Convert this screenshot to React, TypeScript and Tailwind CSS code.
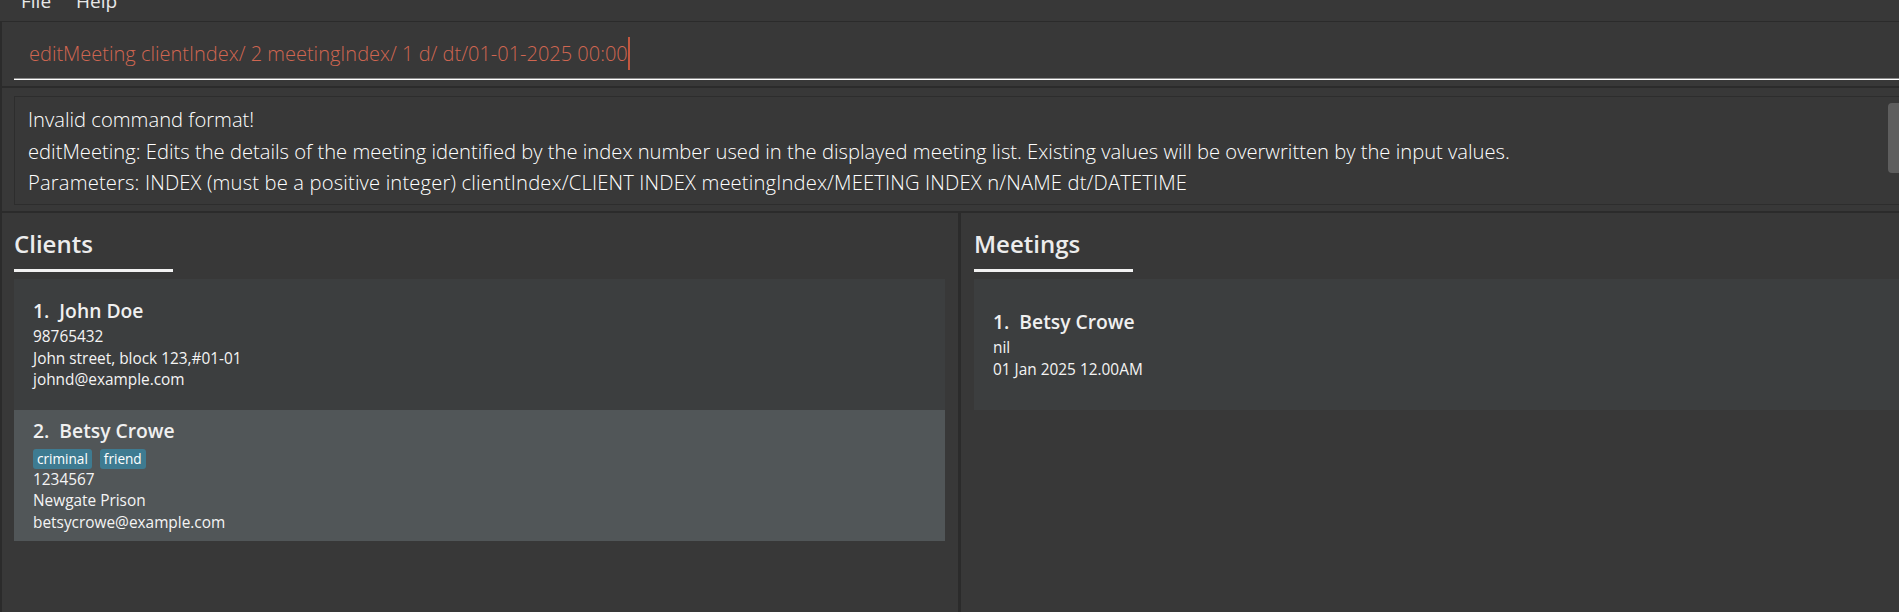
import React from "react";

const font = { fontFamily: '"Open Sans", "Noto Sans", sans-serif' };

type Client = {
  name: string;
  tags: string[];
  phone: string;
  address: string;
  email: string;
};

const clients: Client[] = [
  {
    name: "John Doe",
    tags: [],
    phone: "98765432",
    address: "John street, block 123,#01-01",
    email: "johnd@example.com",
  },
  {
    name: "Betsy Crowe",
    tags: ["criminal", "friend"],
    phone: "1234567",
    address: "Newgate Prison",
    email: "betsycrowe@example.com",
  },
];

function PanelTitle({ title }: { title: string }) {
  return (
    <div className="flex flex-col">
      <div className="h-[32px] text-[24px] leading-[33px] font-semibold text-[#ececec]">
        {title}
      </div>
      <div className="mt-[10px] h-[3px] w-[159px] bg-[#f2f2f2]" />
    </div>
  );
}

function ClientCard({ client, index }: { client: Client; index: number }) {
  return (
    <div
      className={
        index % 2 === 0
          ? "flex h-[131px] flex-col justify-center bg-[#3c3e3f] pl-[19px]"
          : "flex h-[131px] flex-col justify-center bg-[#515658] pl-[19px]"
      }
    >
      <div className="mb-[2px] text-[19.3px] leading-[26px] font-semibold text-[#f0f0f0]">
        {index + 1}.&nbsp;&nbsp;{client.name}
      </div>
      {client.tags.length > 0 && (
        <div className="mt-[3px] flex gap-[8px]">
          {client.tags.map((t) => (
            <span
              key={t}
              className="h-[20px] rounded-[3px] bg-[#3e7b91] px-[4px] text-[13.6px] leading-[20px] text-white"
            >
              {t}
            </span>
          ))}
        </div>
      )}
      <div className="text-[15.4px] leading-[21.5px] text-[#f4f4f4]">{client.phone}</div>
      <div className="text-[15.4px] leading-[21.5px] text-[#f4f4f4]">{client.address}</div>
      <div className="text-[15.4px] leading-[21.5px] text-[#f4f4f4]">{client.email}</div>
    </div>
  );
}

export default function App() {
  return (
    <div className="flex h-[612px] w-full flex-col overflow-hidden bg-[#383838]" style={font}>
      {/* Menu bar, scrolled partly out of view */}
      <div className="h-[22px] overflow-hidden border-b border-[#2b2b2b]">
        <div className="-mt-[13px] flex gap-[25px] pl-[21px] text-[19px] leading-[28px] text-[#e8e8e8]">
          <span>File</span>
          <span>Help</span>
        </div>
      </div>

      {/* Command box */}
      <div className="h-[66px] border-b-2 border-l-2 border-[#2b2b2b] pt-[6px] pl-[12px]">
        <div className="flex h-[52px] items-center border-b border-white pl-[15px] shadow-[inset_0_-1px_0_#8c8c8c]">
          <span className="text-[20px] font-light text-[#d06651]">
            editMeeting clientIndex/ 2 meetingIndex/ 1 d/ dt/01-01-2025 00:00
          </span>
          <span className="h-[33px] w-[2px] bg-[#c2573f]" />
        </div>
      </div>

      {/* Result display */}
      <div className="h-[125px] border-b-2 border-l-2 border-[#2b2b2b] pt-[8px] pl-[12px]">
        <div className="flex h-[109px] border-t border-b border-l border-[#2d2d2d]">
          <div className="flex-1 pt-[7px] pl-[13px] text-[20.2px] leading-[31.5px] font-light text-white">
            <div>Invalid command format!</div>
            <div>
              editMeeting: Edits the details of the meeting identified by the index number used in the
              displayed meeting list. Existing values will be overwritten by the input values.
            </div>
            <div className="tracking-[0.15px]">
              Parameters: INDEX (must be a positive integer) clientIndex/CLIENT INDEX
              meetingIndex/MEETING INDEX n/NAME dt/DATETIME
            </div>
          </div>
          <div className="w-[11px] pt-[6px]">
            <div className="h-[70px] rounded-l-[4px] bg-[#5e5e5e]" />
          </div>
        </div>
      </div>

      {/* Lists */}
      <div className="flex flex-1">
        <div className="w-[961px] border-r-[3px] border-l-2 border-[#2b2b2b] pt-[14px] pr-[13px] pl-[12px]">
          <PanelTitle title="Clients" />
          <div className="mt-[7px] flex flex-col">
            {clients.map((c, i) => (
              <ClientCard key={c.name} client={c} index={i} />
            ))}
          </div>
        </div>
        <div className="flex-1 pt-[14px] pl-[13px]">
          <PanelTitle title="Meetings" />
          <div className="mt-[7px] flex h-[131px] flex-col justify-center bg-[#3c3e3f] pl-[19px]">
            <div className="mb-[2px] text-[19.3px] leading-[26px] font-semibold text-[#f0f0f0]">
              1.&nbsp;&nbsp;Betsy Crowe
            </div>
            <div className="text-[15.4px] leading-[21.5px] text-[#f4f4f4]">nil</div>
            <div className="text-[15.4px] leading-[21.5px] text-[#f4f4f4]">01 Jan 2025 12.00AM</div>
          </div>
        </div>
      </div>
    </div>
  );
}
